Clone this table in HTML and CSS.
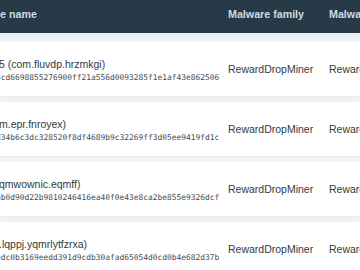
FILE: index.html
```html
<!DOCTYPE html>
<html>
<head>
<meta charset="utf-8">
<link rel="stylesheet" href="styles.css">
</head>
<body>
<div class="table">
  <div class="head">
    <div class="col-name">e name</div>
    <div class="col-family">Malware family</div>
    <div class="col-family2">Malware family</div>
  </div>
  <div class="head-shadow"></div>
  <div class="row">
    <div class="col-name">
      <div class="app">5 (com.fluvdp.hrzmkgi)</div>
      <div class="hash">4cd6698855276900ff21a556d0093285f1e1af43e862506</div>
    </div>
    <div class="col-family">RewardDropMiner</div>
    <div class="col-family2">RewardDropMiner</div>
  </div>
  <div class="row">
    <div class="col-name">
      <div class="app">m.epr.fnroyex)</div>
      <div class="hash">d34b6c3dc328520f8df4689b9c32269ff3d05ee9419fd1c</div>
    </div>
    <div class="col-family">RewardDropMiner</div>
    <div class="col-family2">RewardDropMiner</div>
  </div>
  <div class="row">
    <div class="col-name">
      <div class="app">qmwownic.eqmff)</div>
      <div class="hash">ab0d90d22b9810246416ea40f0e43e8ca2be855e9326dcf</div>
    </div>
    <div class="col-family">RewardDropMiner</div>
    <div class="col-family2">RewardDropMiner</div>
  </div>
  <div class="row">
    <div class="col-name">
      <div class="app">.lqppj.yqmrlytfzrxa)</div>
      <div class="hash">edc0b3169eedd391d9cdb30afad65054d0cd0b4e682d37b</div>
    </div>
    <div class="col-family">RewardDropMiner</div>
    <div class="col-family2">RewardDropMiner</div>
  </div>
</div>
</body>
</html>
```

FILE: styles.css
```css
html, body {
  margin: 0;
  padding: 0;
  background: #f1f2f4;
  overflow: hidden;
}
.table {
  width: 360px;
  height: 270px;
  overflow: hidden;
  font-family: "Liberation Sans", Arial, sans-serif;
  background: #f1f2f4;
}
.head {
  display: flex;
  align-items: flex-start;
  height: 33px;
  background: #263a47;
  color: #d3dbe0;
  font-weight: bold;
  font-size: 10.7px;
  line-height: 13px;
  box-sizing: border-box;
  padding-top: 8px;
  white-space: nowrap;
}
.head-shadow {
  height: 9px;
  background: linear-gradient(#e3eaef, #f3f5f7);
}
.col-name {
  width: 228px;
  flex: none;
  overflow: hidden;
  white-space: nowrap;
}
.col-family {
  width: 101px;
  flex: none;
  white-space: nowrap;
}
.col-family2 {
  flex: none;
  white-space: nowrap;
}
.row {
  display: flex;
  align-items: center;
  height: 54px;
  margin-bottom: 6px;
  background: #ffffff;
  color: #333b40;
  font-size: 10.5px;
  line-height: 13px;
  box-shadow: 0 1px 2px rgba(0, 0, 0, 0.04);
}
.row .col-name {
  padding-top: 3px;
}
.row .col-family,
.row .col-family2 {
  margin-top: 1px;
}
.app {
  color: #333b40;
  text-indent: -1px;
}
.hash {
  margin-top: 2px;
  font-family: "DejaVu Sans Mono", "Liberation Mono", monospace;
  font-size: 7.9px;
  line-height: 10px;
  color: #444b50;
  text-indent: -4px;
}
```
